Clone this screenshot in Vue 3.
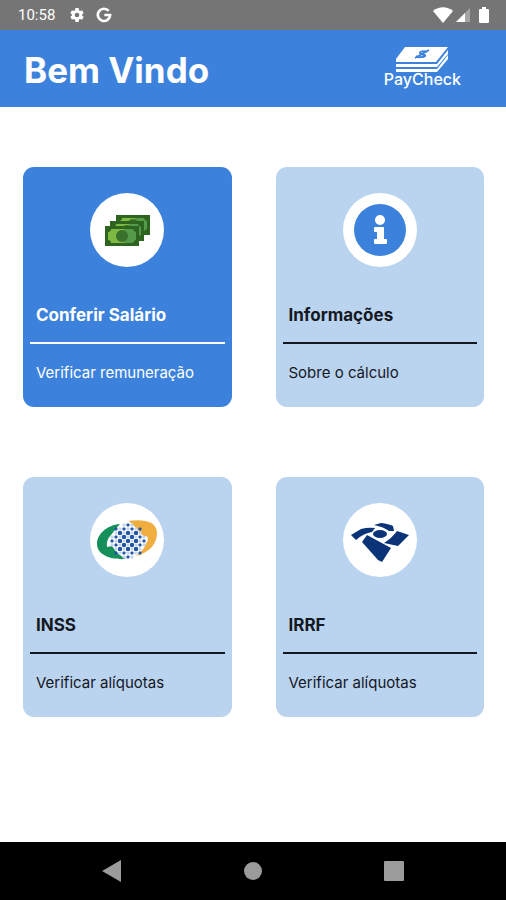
<template>
  <div class="screen">
    <div class="status-bar">
      <div class="status-left">
        <span class="clock">10:58</span>
        <svg class="status-icon" viewBox="0 0 24 24" aria-hidden="true">
          <path fill="#fff" fill-rule="evenodd" d="M19.700 13a7.500 7.500 0 0 0 0-2l2.300-1.800-2.400-4.400-2.900 1.100a7.500 7.500 0 0 0-1.800-1L14.500 1.500h-5l-.4 3.400a7.500 7.500 0 0 0-1.800 1L4.400 4.800 2 9.200 4.300 11a7.500 7.500 0 0 0 0 2L2 14.800l2.400 4.400 2.900-1.100a7.500 7.500 0 0 0 1.800 1l.4 3.400h5l.4-3.400a7.500 7.500 0 0 0 1.800-1l2.900 1.100 2.400-4.400zM12 15.500a3.500 3.500 0 1 1 0-7 3.500 3.500 0 0 1 0 7z" />
        </svg>
        <svg class="status-icon" viewBox="0 0 24 24" aria-hidden="true">
          <path fill="none" stroke="#fff" stroke-width="4" d="M19 5.800A9.200 9.200 0 1 0 21.200 12H12.500" />
        </svg>
      </div>
      <div class="status-right">
        <svg width="20" height="16" viewBox="0 0 20 16" aria-hidden="true">
          <path fill="#fff" d="M0 4C6-1 14-1 20 4L10 16z" />
        </svg>
        <svg width="14" height="14" viewBox="0 0 14 14" aria-hidden="true">
          <path fill="#a6a6a6" d="M14 0v14H0z" />
          <path fill="#fff" d="M9 5v9H0z" />
        </svg>
        <svg class="battery" width="10" height="16" viewBox="0 0 10 16" aria-hidden="true">
          <path fill="#fff" d="M3 0h4v2h2q1 0 1 1v12q0 1-1 1H1q-1 0-1-1V3q0-1 1-1h2z" />
        </svg>
      </div>
    </div>

    <header class="header">
      <h1>Bem Vindo</h1>
      <div class="logo">
        <svg width="54" height="26" viewBox="0 0 54 26" aria-hidden="true">
          <path fill="#fff" d="M10 0h43L41 15H1v-3z" />
          <path fill="#fff" d="M1 17h41L53 3v4L42 20H1z" />
          <path fill="#fff" d="M1 22h41L53 8v4L42 25H1z" />
          <path fill="none" stroke="#3c82dc" stroke-width="2" d="M32 5c-2-1-7-1-7 1s6 1 5 3c-1 1-7 2-9 0M34 3L20 11" />
        </svg>
        <span>PayCheck</span>
      </div>
    </header>

    <main class="cards">
      <button
        v-for="card in cards"
        :key="card.icon"
        type="button"
        class="card"
        :class="{ active: card.active }"
      >
        <span class="card-icon">
          <svg v-if="card.icon === 'money'" viewBox="0 0 74 74" aria-hidden="true">
            <g v-for="bill in bills" :key="bill.x" :transform="`translate(${bill.x} ${bill.y})`">
              <rect width="34" height="20" fill="#2c6420" />
              <path fill="#7fb843" d="M6 3h22q0 3 3 3v8q-3 0-3 3H6q0-3-3-3V6q3 0 3-3z" />
              <path fill="#549a48" d="M19 3h9q0 3 3 3v8q-3 0-3 3h-9z" />
              <ellipse cx="17" cy="10" rx="6" ry="6" fill="#39702b" />
            </g>
          </svg>

          <svg v-else-if="card.icon === 'info'" viewBox="0 0 74 74" aria-hidden="true">
            <circle cx="37" cy="37" r="26" fill="#3c82dc" />
            <circle cx="37" cy="27" r="5" fill="#fff" />
            <path fill="#fff" d="M32 34h8q1 0 1 1v11h2q1 0 1 1v3q0 1-1 1H32q-1 0-1-1v-3q0-1 1-1h2v-7h-2q-1 0-1-1v-3q0-1 1-1z" />
          </svg>

          <svg v-else-if="card.icon === 'inss'" viewBox="0 0 74 74" aria-hidden="true">
            <path fill="#16905a" d="M30 21C17 22 7 31 7 41c0 11 14 16 29 15-6-3-10-7-14-13l-5 1q-1-7 4-12 3-4 9-11z" />
            <path fill="#f0ad40" d="M38 18c15-2 29 0 29 12 0 12-9 20-21 23 6-5 9-8 10-14q4-4 0-6l-4 0c-4-6-8-11-14-15z" />
            <path fill="#fff" d="M39 18L58 38 39 58 20 38z" />
            <rect
              v-for="(dot, i) in dots"
              :key="i"
              :x="dot.x"
              :y="dot.y"
              :width="dot.size"
              :height="dot.size"
              rx="1"
              :fill="dot.fill"
            />
          </svg>

          <svg v-else viewBox="0 0 74 74" aria-hidden="true">
            <g fill="#0b3478">
              <path d="M8 32l10-6q7-2 14-1l-3 4q-8 1-16 8z" />
              <path d="M31 22l7-2q8 1 12 3l1 5-5 0q-5-4-15-6z" />
              <ellipse cx="37" cy="31" rx="7" ry="4" />
              <path d="M54 28l12 4-11 11-14-3q8-5 13-12z" />
              <path d="M24 32l24 13-9 14-4-2L19 39z" />
            </g>
          </svg>
        </span>
        <span class="card-title">{{ card.title }}</span>
        <span class="card-text">{{ card.text }}</span>
      </button>
    </main>

    <nav class="nav-bar">
      <button type="button" aria-label="Voltar">
        <svg width="20" height="22" viewBox="0 0 20 22"><path fill="#9b9b9b" d="M0 11L19 0v22z" /></svg>
      </button>
      <button type="button" aria-label="Início">
        <svg width="18" height="18" viewBox="0 0 18 18"><circle cx="9" cy="9" r="9" fill="#9b9b9b" /></svg>
      </button>
      <button type="button" aria-label="Recentes">
        <svg width="20" height="20" viewBox="0 0 20 20"><rect width="20" height="20" rx="1" fill="#9b9b9b" /></svg>
      </button>
    </nav>
  </div>
</template>

<script setup>
import { ref } from 'vue'

const cards = ref([
  { icon: 'money', title: 'Conferir Salário', text: 'Verificar remuneração', active: true },
  { icon: 'info', title: 'Informações', text: 'Sobre o cálculo' },
  { icon: 'inss', title: 'INSS', text: 'Verificar alíquotas' },
  { icon: 'irrf', title: 'IRRF', text: 'Verificar alíquotas' }
])

// back to front
const bills = [
  { x: 26, y: 22 },
  { x: 20, y: 28 },
  { x: 15, y: 33 }
]

// globe made of a checkerboard, smaller squares on the rim
const dots = []
for (let row = -4; row <= 4; row++) {
  for (let col = -4; col <= 4; col++) {
    const dist = Math.hypot(row, col)
    if (dist > 4.3) continue
    const even = (row + col) % 2 === 0
    const size = even && dist < 3 ? 4 : 3
    dots.push({
      x: 38 + col * 4 - size / 2,
      y: 38 + row * 4 - size / 2,
      size,
      fill: even ? '#2456a6' : '#c3d6ee'
    })
  }
}
</script>

<style>
body {
  margin: 0;
  background: #fff;
}
</style>

<style scoped>
.screen {
  min-height: 100vh;
  display: flex;
  flex-direction: column;
  font-family: Inter, sans-serif;
  background: #fff;
}

.status-bar {
  height: 30px;
  box-sizing: border-box;
  padding: 0 17px 0 18px;
  display: flex;
  justify-content: space-between;
  align-items: center;
  background: #757575;
  color: #fff;
}

.status-left {
  display: flex;
  align-items: center;
  gap: 11px;
}

.clock {
  font-family: Roboto, sans-serif;
  font-size: 15px;
  margin-right: 3px;
}

.status-icon {
  width: 16px;
  height: 16px;
}

.status-right {
  display: flex;
  align-items: center;
  gap: 3px;
}

.battery {
  margin-left: 6px;
}

/* HEADER */
.header {
  height: 77px;
  box-sizing: border-box;
  padding: 0 45px 0 24px;
  display: flex;
  justify-content: space-between;
  align-items: center;
  background: #3c82dc;
  color: #fff;
}

.header h1 {
  margin: 0;
  padding-top: 2px;
  font-size: 35px;
  line-height: 40px;
  font-weight: 700;
}

.logo {
  display: flex;
  flex-direction: column;
  align-items: center;
  padding-bottom: 6px;
}

.logo span {
  font-size: 16px;
  line-height: 12px;
  font-weight: 500;
}

/* CARDS */
.cards {
  flex: 1;
  display: grid;
  grid-template-columns: 1fr 1fr;
  align-content: start;
  gap: 70px 44px;
  padding: 60px 22px 60px 23px;
}

.card {
  display: flex;
  flex-direction: column;
  min-width: 0;
  height: 240px;
  padding: 26px 7px 0;
  border: none;
  border-radius: 11px;
  background: #bad3ef;
  color: #14181f;
  font-family: inherit;
  text-align: left;
  cursor: pointer;
}

.card.active {
  background: #3c82dc;
  color: #fff;
}

.card-icon {
  align-self: center;
  width: 74px;
  height: 74px;
  border-radius: 50%;
  background: #fff;
}

.card-icon svg {
  display: block;
}

.card-title {
  margin-top: 36px;
  padding: 0 6px 15px;
  border-bottom: 2px solid currentColor;
  font-size: 17px;
  line-height: 24px;
  font-weight: 700;
}

.card-text {
  padding: 18px 6px 0;
  font-size: 15px;
  line-height: 22px;
}

/* NAVIGATION */
.nav-bar {
  height: 58px;
  box-sizing: border-box;
  padding: 0 42px;
  display: flex;
  background: #000;
}

.nav-bar button {
  flex: 1;
  display: flex;
  justify-content: center;
  align-items: center;
  padding: 0;
  border: none;
  background: none;
  cursor: pointer;
}
</style>
